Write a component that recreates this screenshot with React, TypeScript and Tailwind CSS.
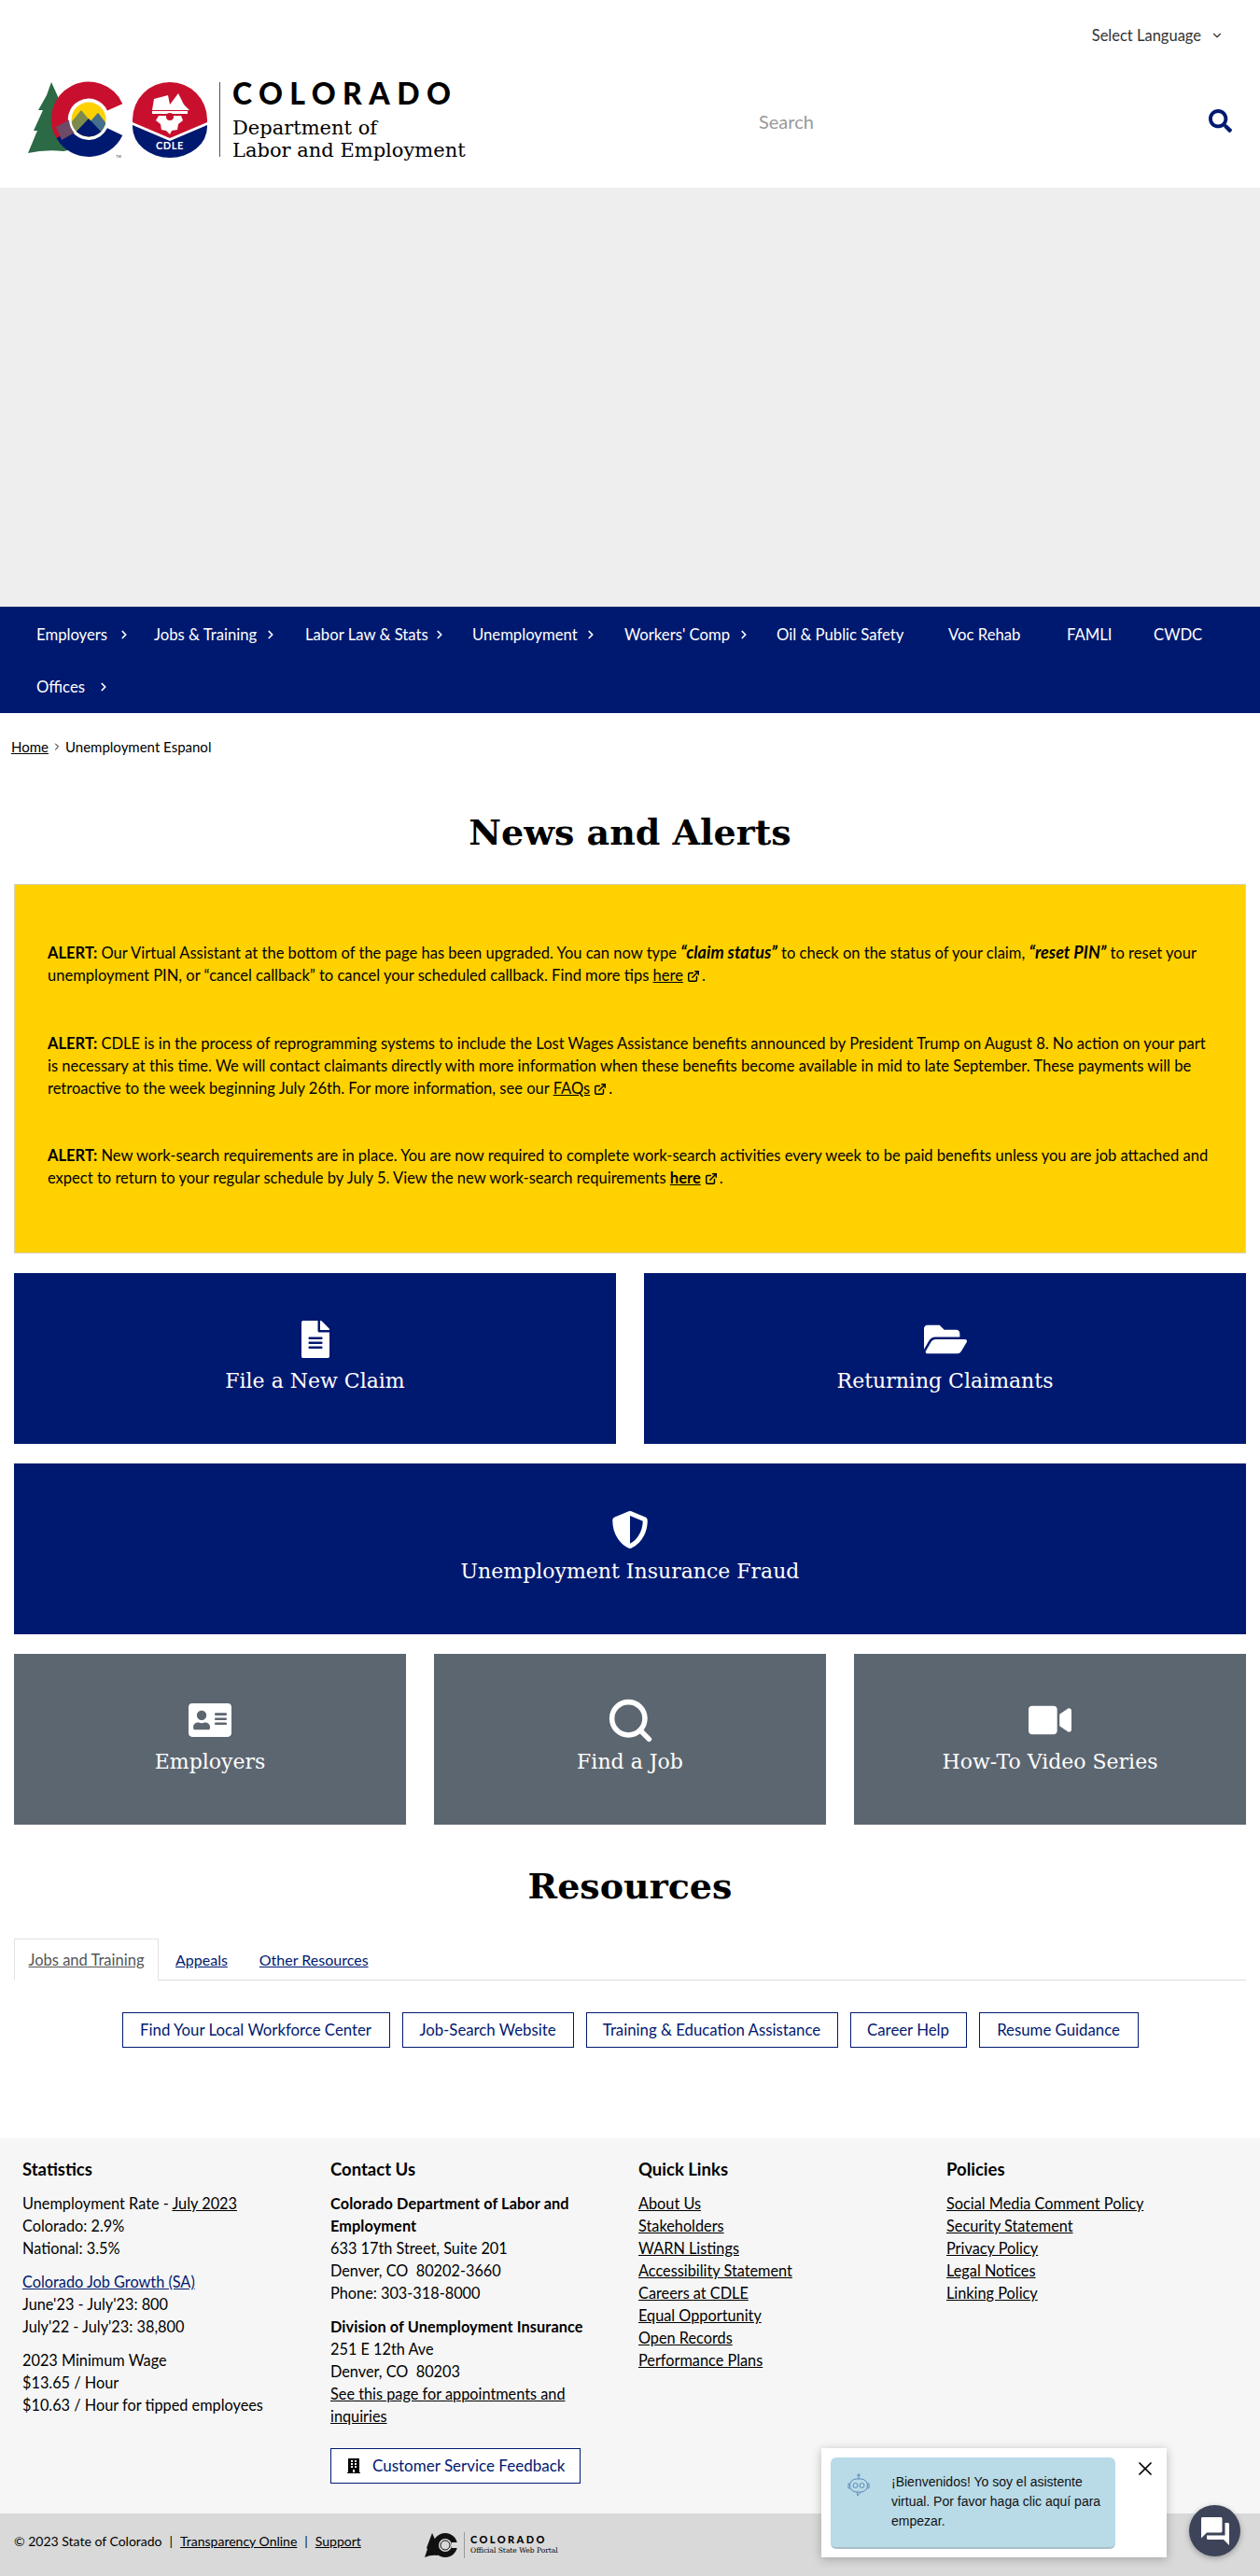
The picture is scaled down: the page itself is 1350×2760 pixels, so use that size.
import { ChevronDown, ChevronRight, ExternalLink, Search, X } from "lucide-react"
import { FaAddressCard, FaBuilding, FaFileAlt, FaFolderOpen, FaSearch, FaShieldAlt, FaVideo } from "react-icons/fa"
import { MdQuestionAnswer } from "react-icons/md"

const navItems = [
  { label: "Employers", w: "w-[126px]", arrow: "ml-[11px]" },
  { label: "Jobs & Training", w: "w-[162px]", arrow: "ml-[8px]" },
  { label: "Labor Law & Stats", w: "w-[179px]", arrow: "ml-[5px]" },
  { label: "Unemployment", w: "w-[163px]", arrow: "ml-[7px]" },
  { label: "Workers' Comp", w: "w-[163px]", arrow: "ml-[8px]" },
  { label: "Oil & Public Safety", w: "w-[184px]", arrow: "" },
  { label: "Voc Rehab", w: "w-[127px]", arrow: "" },
  { label: "FAMLI", w: "w-[93px]", arrow: "" },
  { label: "CWDC", w: "w-[90px]", arrow: "" },
  { label: "Offices", w: "w-[126px]", arrow: "ml-[13px]" },
]

const resourceLinks = [
  { label: "Find Your Local Workforce Center", w: "w-[287px]" },
  { label: "Job-Search Website", w: "w-[184px]" },
  { label: "Training & Education Assistance", w: "w-[270px]" },
  { label: "Career Help", w: "w-[125px]" },
  { label: "Resume Guidance", w: "w-[171px]" },
]

const quickLinks = [
  "About Us",
  "Stakeholders",
  "WARN Listings",
  "Accessibility Statement",
  "Careers at CDLE",
  "Equal Opportunity",
  "Open Records",
  "Performance Plans",
]

const policies = [
  "Social Media Comment Policy",
  "Security Statement",
  "Privacy Policy",
  "Legal Notices",
  "Linking Policy",
]

function ColoradoLogo() {
  return (
    <svg className="w-[195px] h-[84px] shrink-0" viewBox="30 86 195 84">
      <defs>
        <clipPath id="sun">
          <circle cx="95" cy="128" r="18.5" />
        </clipPath>
      </defs>
      <path d="M55 88 L65 110 L60 110 L70 130 L64 130 L78 160 L68 162 Q48 160 30 164 L40 140 L36 140 L46 118 L41 118 L50 102 Z" fill="#2b6a45" />
      <path d="M123.1 114.9 A31 31 0 1 0 68.2 143.5" fill="none" stroke="#c8102e" strokeWidth="18" />
      <path d="M68.2 143.5 A31 31 0 0 0 123.1 141.1" fill="none" stroke="#001970" strokeWidth="18" />
      <path d="M60 136 L75 128 L80 142 L66 150 Z" fill="#6d4a66" />
      <circle cx="95" cy="128" r="21" fill="#fff" />
      <g clipPath="url(#sun)">
        <rect x="75" y="108" width="40" height="42" fill="#ffd100" />
        <path d="M72 136 L87 118 L97 130 L105 121 L118 138 V150 H72 Z" fill="#7d8a4e" />
        <path d="M97 130 L105 121 L118 138 V150 H100 Z" fill="#456f8c" />
        <path d="M76 147 L95 127 L114 147 V150 H76 Z" fill="#001970" />
      </g>
      <text x="124" y="169" fontSize="4" fill="#333" fontFamily="Liberation Sans, sans-serif">TM</text>
      <path d="M142 128 A40 40 0 0 1 222 128 L222 131 L182 148 L142 131 Z" fill="#c8102e" />
      <path d="M142 134 L182 151 L222 134 V136 A40 33 0 0 1 142 136 Z" fill="#001970" />
      <path d="M165 106 L180 102 L182 112 L191 100 L197 112 L203 118 H163 Z" fill="#fff" />
      <rect x="163" y="119" width="38" height="3" fill="#fff" />
      <path d="M170 124 H194 L196 129 L191 133 L190 139 L184 140 L182 144 L178 140 L173 139 L172 133 L167 129 Z" fill="#fff" />
      <circle cx="182" cy="125" r="4" fill="#c8102e" />
      <text x="182" y="160" fontSize="11" fontWeight="700" fill="#fff" textAnchor="middle" fontFamily="Lato, sans-serif" letterSpacing="0.6">CDLE</text>
    </svg>
  )
}

function FooterLogo() {
  return (
    <svg className="w-[36px] h-[28px] shrink-0" viewBox="0 0 36 28">
      <path d="M8 1 L13 12 L14 25 Q7 24 0 27 L3 18 L2 17 L5 9 Z" fill="#111" />
      <circle cx="22" cy="14" r="10" fill="none" stroke="#111" strokeWidth="6" />
      <rect x="29" y="11" width="7" height="6" fill="#d9d9d9" />
      <circle cx="22" cy="14" r="5" fill="#d9d9d9" stroke="#111" />
    </svg>
  )
}

function RobotIcon() {
  return (
    <svg className="w-[24px] h-[26px]" viewBox="0 0 24 26" fill="none" stroke="#5b87b5" strokeWidth="1">
      <circle cx="12" cy="2" r="1.2" />
      <path d="M12 3.5 V6" />
      <rect x="2.5" y="6" width="19" height="14" rx="7" />
      <circle cx="8.5" cy="13" r="2.5" />
      <circle cx="15.5" cy="13" r="2.5" />
      <path d="M10 20 L11 24 L14 20" />
      <path d="M2.5 11 H1 V16 H2.5 M21.5 11 H23 V16 H21.5" />
    </svg>
  )
}

function ExtIcon() {
  return <ExternalLink className="inline-block w-[14px] h-[14px] ml-[4px] mr-[2px] align-[-2px]" strokeWidth={2.5} />
}

function BigTile({ icon, title, color }: { icon: React.ReactNode; title: string; color: string }) {
  return (
    <a className={`flex flex-col items-center h-[183px] pt-[51px] text-white ${color}`}>
      <span className="flex items-center justify-center h-[40px]">{icon}</span>
      <span className="mt-[10px] font-['DejaVu_Serif',serif] text-[22px] leading-[30px]">{title}</span>
    </a>
  )
}

export default function App() {
  return (
    <div className="relative w-full h-[2760px] overflow-hidden bg-white font-['Lato',sans-serif] text-[16.3px] leading-[24px] text-black">
      <header className="h-[201px] bg-white">
        <div className="flex justify-end items-center h-[76px] pr-[39px] text-[16.5px] text-[#333]">
          <span>Select Language</span>
          <ChevronDown className="w-[14px] h-[14px] ml-[10px]" strokeWidth={2} />
        </div>
        <div className="flex items-center h-[104px] pl-[30px] pr-[30px]">
          <ColoradoLogo />
          <div className="w-px h-[80px] bg-[#555] ml-[10px] mr-[13px]" />
          <div className="w-[564px] shrink-0">
            <div className="font-black text-[32px] leading-[32px] tracking-[7.4px]">COLORADO</div>
            <div className="mt-[9px] font-['DejaVu_Serif',serif] text-[21px] leading-[24px]">
              Department of
              <br />
              Labor and Employment
            </div>
          </div>
          <span className="mt-[4px] text-[20px] text-[#999]">Search</span>
          <FaSearch className="ml-auto mt-[3px] w-[25px] h-[25px] text-[#001970]" />
        </div>
      </header>

      <div className="h-[449px] bg-[#eeeeee]" />

      <nav className="flex flex-wrap h-[114px] pl-[39px] pt-px bg-[#001970] border-t border-[#0d2a6b] text-[16.7px] text-white">
        {navItems.map((item) => (
          <a key={item.label} className={`flex items-center h-[56px] ${item.w}`}>
            {item.label}
            {item.arrow && <ChevronRight className={`w-[14px] h-[14px] ${item.arrow}`} strokeWidth={3} />}
          </a>
        ))}
      </nav>

      <div className="flex items-center h-[72px] pl-[12px] text-[15px]">
        <a className="underline">Home</a>
        <ChevronRight className="mx-[3px] w-[12px] h-[12px]" strokeWidth={2} />
        <span>Unemployment Espanol</span>
      </div>

      <main className="px-[15px]">
        <h1 className="h-[111px] pt-[32px] text-center font-['DejaVu_Serif',serif] font-bold text-[38px] leading-[48px]">News and Alerts</h1>

        <section className="h-[396px] pt-[61px] px-[35px] bg-[#ffd100] border border-[#d8d3bd] text-[16.55px]">
          <p>
            <b>ALERT:</b> Our Virtual Assistant at the bottom of the page has been upgraded. You can now type <b className="text-[18px] leading-[16px]"><i>“claim status”</i></b> to check on the status of your claim, <b className="text-[18px] leading-[16px]"><i>“reset PIN”</i></b> to reset your unemployment PIN, or “cancel callback” to cancel your scheduled callback. Find more tips <a className="underline">here</a><ExtIcon />.
          </p>
          <p className="mt-[49px]">
            <b>ALERT:</b> CDLE is in the process of reprogramming systems to include the Lost Wages Assistance benefits announced by President Trump on August 8. No action on your part is necessary at this time. We will contact claimants directly with more information when these benefits become available in mid to late September. These payments will be retroactive to the week beginning July 26th. For more information, see our <a className="underline">FAQs</a><ExtIcon />.
          </p>
          <p className="mt-[48px]">
            <b>ALERT:</b> New work-search requirements are in place. You are now required to complete work-search activities every week to be paid benefits unless you are job attached and expect to return to your regular schedule by July 5. View the new work-search requirements <a className="underline font-bold">here</a><ExtIcon />.
          </p>
        </section>

        <div className="grid grid-cols-2 gap-x-[30px] mt-[21px]">
          <BigTile color="bg-[#001970]" icon={<FaFileAlt className="w-[40px] h-[40px]" />} title="File a New Claim" />
          <BigTile color="bg-[#001970]" icon={<FaFolderOpen className="w-[46px] h-[46px]" />} title="Returning Claimants" />
        </div>
        <div className="mt-[21px]">
          <BigTile color="bg-[#001970]" icon={<FaShieldAlt className="w-[40px] h-[40px]" />} title="Unemployment Insurance Fraud" />
        </div>
        <div className="grid grid-cols-3 gap-x-[30px] mt-[21px]">
          <BigTile color="bg-[#5c6670]" icon={<FaAddressCard className="w-[46px] h-[46px]" />} title="Employers" />
          <BigTile color="bg-[#5c6670]" icon={<Search className="w-[53px] h-[53px]" strokeWidth={2.5} />} title="Find a Job" />
          <BigTile color="bg-[#5c6670]" icon={<FaVideo className="w-[46px] h-[46px]" />} title="How-To Video Series" />
        </div>

        <h2 className="h-[122px] pt-[42px] text-center font-['DejaVu_Serif',serif] font-bold text-[38px] leading-[48px]">Resources</h2>

        <div className="flex h-[45px] border-b border-[#dddddd] text-[16px]">
          <a className="w-[155px] h-[45px] border border-[#e2e2e2] border-b-white bg-white text-center text-[16.5px] leading-[45px] text-[#555] underline">Jobs and Training</a>
          <a className="ml-[18px] leading-[45px] text-[#001970] underline">Appeals</a>
          <a className="ml-[34px] leading-[45px] text-[#001970] underline">Other Resources</a>
        </div>

        <div className="flex justify-center gap-x-[13px] mt-[34px] text-[16.8px]">
          {resourceLinks.map((link) => (
            <a key={link.label} className={`flex items-center justify-center h-[38px] border border-[#001970] text-[#001970] ${link.w}`}>
              {link.label}
            </a>
          ))}
        </div>
      </main>

      <footer className="mt-[97px]">
        <div className="grid grid-cols-[330px_330px_330px_330px] h-[402px] pl-[24px] pt-[21px] bg-[#f6f6f6]">
          <div>
            <h4 className="font-bold text-[18.5px]">Statistics</h4>
            <p className="mt-[13px]">
              Unemployment Rate - <a className="underline">July 2023</a>
              <br />
              Colorado: 2.9%
              <br />
              National: 3.5%
            </p>
            <p className="mt-[12px]">
              <a className="underline text-[#001970]">Colorado Job Growth (SA)</a>
              <br />
              June'23 - July'23: 800
              <br />
              July'22 - July'23: 38,800
            </p>
            <p className="mt-[12px]">
              2023 Minimum Wage
              <br />
              $13.65 / Hour
              <br />
              $10.63 / Hour for tipped employees
            </p>
          </div>
          <div className="pr-[30px]">
            <h4 className="font-bold text-[18.5px]">Contact Us</h4>
            <p className="mt-[13px]">
              <b className="tracking-[0.1px]">Colorado Department of Labor and Employment</b>
              <br />
              633 17th Street, Suite 201
              <br />
              Denver, CO&nbsp; 80202-3660
              <br />
              Phone: 303-318-8000
            </p>
            <p className="mt-[12px]">
              <b className="tracking-[0.1px]">Division of Unemployment Insurance</b>
              <br />
              251 E 12th Ave
              <br />
              Denver, CO&nbsp; 80203
              <br />
              <a className="underline">See this page for appointments and inquiries</a>
            </p>
            <a className="flex items-center w-[268px] h-[38px] mt-[22px] pl-[17px] border border-[#001970] bg-white text-[17px] text-[#001970]">
              <FaBuilding className="w-[14px] h-[16px] mr-[13px] text-black" />
              Customer Service Feedback
            </a>
          </div>
          <div>
            <h4 className="font-bold text-[18.5px]">Quick Links</h4>
            <ul className="mt-[13px]">
              {quickLinks.map((label) => (
                <li key={label} className="underline">{label}</li>
              ))}
            </ul>
          </div>
          <div>
            <h4 className="font-bold text-[18.5px]">Policies</h4>
            <ul className="mt-[13px]">
              {policies.map((label) => (
                <li key={label} className="underline">{label}</li>
              ))}
            </ul>
          </div>
        </div>

        <div className="flex items-center h-[67px] pl-[15px] bg-[#d9d9d9] text-[14px]">
          <div className="w-[440px] -mt-[8px] flex items-center">
            <span>© 2023 State of Colorado</span>
            <span className="mx-[8px]">|</span>
            <a className="underline">Transparency Online</a>
            <span className="mx-[8px]">|</span>
            <a className="underline">Support</a>
          </div>
          <FooterLogo />
          <div className="w-px h-[28px] bg-[#999] mx-[6px]" />
          <div className="flex flex-col">
            <span className="font-black text-[11px] leading-[13px] tracking-[2.4px]">COLORADO</span>
            <span className="font-['DejaVu_Serif',serif] text-[7.5px] leading-[12px]">Official State Web Portal</span>
          </div>
        </div>
      </footer>

      {/* chat widget sits over the footer */}
      <div className="absolute left-[880px] top-[2623px] flex w-[370px] h-[117px] p-[10px] bg-white shadow-[0_2px_10px_rgba(0,0,0,0.25)]">
        <div className="flex w-[305px] h-[98px] pl-[18px] pt-[17px] rounded-[6px] bg-[#b9dbe8] border-b-2 border-[#a8bfca] font-['Liberation_Sans',sans-serif] text-[14px] leading-[21px]">
          <RobotIcon />
          <p className="ml-[23px] w-[235px] -mt-[1px] text-[#111]">¡Bienvenidos! Yo soy el asistente virtual. Por favor haga clic aquí para empezar.</p>
        </div>
        <X className="ml-[20px] w-[24px] h-[24px]" strokeWidth={1.75} />
      </div>
      <div className="absolute left-[1274px] top-[2684px] flex items-center justify-center w-[55px] h-[55px] rounded-full bg-[#3d4459] shadow-[0_2px_6px_rgba(0,0,0,0.3)]">
        <MdQuestionAnswer className="w-[36px] h-[36px] text-white" />
      </div>
    </div>
  )
}
